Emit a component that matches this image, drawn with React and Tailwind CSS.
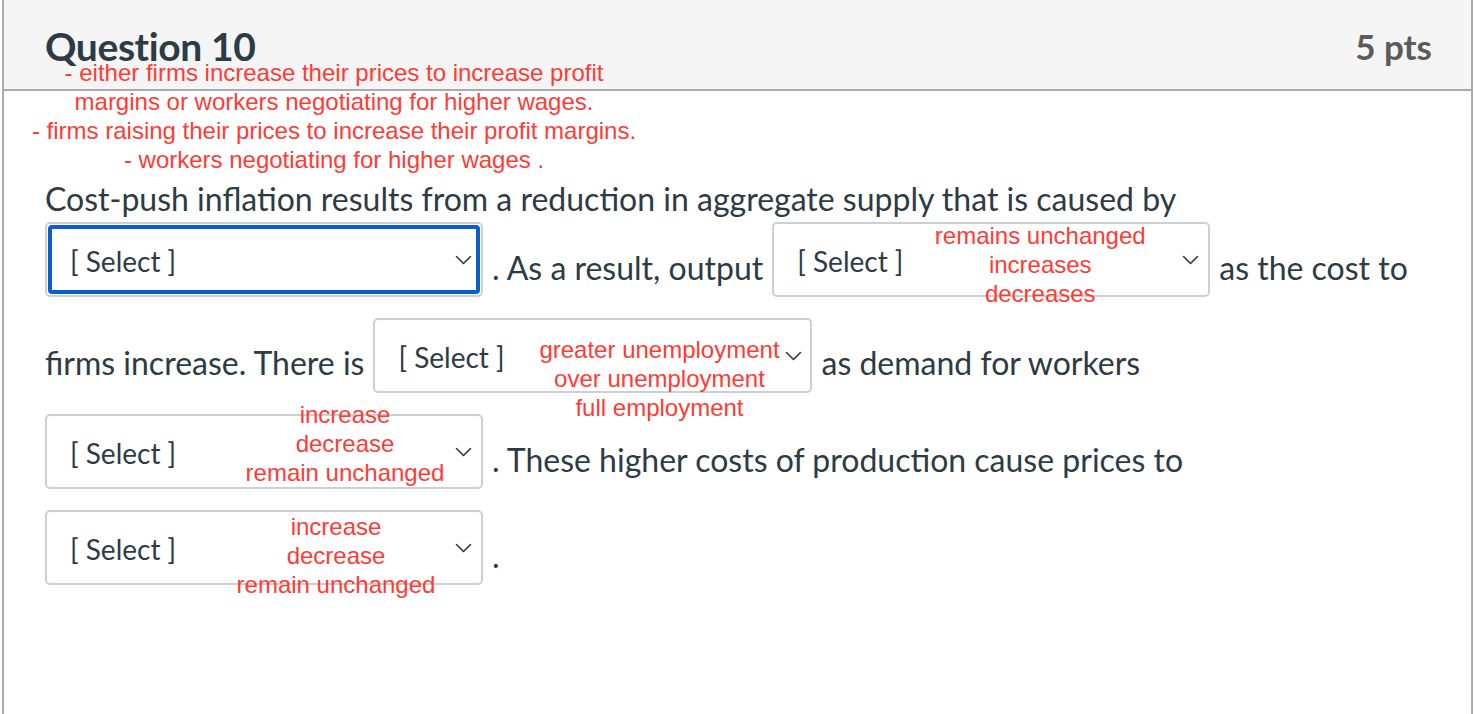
import React from 'react';

const lato = { fontFamily: 'Lato, "Open Sans", sans-serif' };

const Chevron = () => (
  <svg width="17" height="10" viewBox="0 0 17 10" fill="none" className="shrink-0">
    <path d="M1.5 1.5l7 7 7-7" stroke="#2d3b45" strokeWidth="1.6" strokeLinecap="round" strokeLinejoin="round" />
  </svg>
);

// red handwritten-looking notes laid over the form
const Note = ({ lines, className }) => (
  <div
    className={`absolute -translate-x-1/2 text-center whitespace-nowrap text-[24px] leading-[29px] text-[#ff3b36] pointer-events-none ${className}`}
    style={{ fontFamily: '"Liberation Sans", Arial, sans-serif' }}
  >
    {lines.map((l, i) => (
      <div key={i}>{l}</div>
    ))}
  </div>
);

const Select = ({ width, focused, notes, notesClass, pr = 'pr-[9px]' }) => (
  <div
    className={`relative h-[75px] ${width} shrink-0 flex items-center justify-between pl-[23px] ${pr} rounded-[5px] border-2 border-[#cdd0d2] bg-white`}
  >
    {focused && (
      <div className="absolute inset-[1px] rounded-[4px] border-[4px] border-[#0b5fcc]"></div>
    )}
    <span className="text-[28px] text-[#2d3b45] pt-[3px]">[ Select ]</span>
    <Chevron />
    {notes && <Note lines={notes} className={notesClass} />}
  </div>
);

export default function App() {
  return (
    <div className="relative w-[1474px] h-[714px] bg-white overflow-hidden" style={lato}>
      <div className="ml-[2px] mr-[1px] h-full border-x-2 border-[#ababab]">
        {/* Header */}
        <div className="h-[91px] bg-[#f5f5f5] border-b-2 border-[#ababab] flex justify-between pl-[41px] pr-[39px] pt-[26px]">
          <h1 className="text-[39px] leading-[40px] font-bold text-[#2d3b45] tracking-[-0.4px]">Question 10</h1>
          <span className="text-[35px] leading-[40px] font-bold text-[#5b5b5b]">5 pts</span>
        </div>

        {/* Body */}
        <div className="pl-[41px] pt-[88px] text-[32px] text-[#2d3b45]">
          <div className="h-[40px] leading-[40px]">
            Cost-push inflation results from a reduction in aggregate supply that is caused by
          </div>
          <div className="mt-[3px] flex flex-col gap-[21px]">
            <div className="flex items-center gap-[9px]">
              <Select width="w-[438px]" focused />
              <span className="pt-[16px]">. As a result, output</span>
              <Select
                width="w-[438px]"
                notes={['remains unchanged', 'increases', 'decreases']}
                notesClass="left-[266px] top-[-3px]"
              />
              <span className="pt-[16px]">as the cost to</span>
            </div>
            <div className="flex items-center gap-[9px]">
              <span className="pt-[14px]">firms increase. There is</span>
              <Select
                width="w-[439px]"
                pr="pr-[8px]"
                notes={['greater unemployment', 'over unemployment', 'full employment']}
                notesClass="left-[284px] top-[15px]"
              />
              <span className="pt-[14px]">as demand for workers</span>
            </div>
            <div className="flex items-center gap-[9px]">
              <Select
                width="w-[438px]"
                notes={['increase', 'decrease', 'remain unchanged']}
                notesClass="left-[298px] top-[-16px]"
              />
              <span className="pt-[16px]">. These higher costs of production cause prices to</span>
            </div>
            <div className="flex items-center gap-[9px]">
              <Select
                width="w-[438px]"
                notes={['increase', 'decrease', 'remain unchanged']}
                notesClass="left-[289px] top-[0px]"
              />
              <span className="pt-[16px]">.</span>
            </div>
          </div>
        </div>
      </div>

      <Note
        lines={[
          '- either firms increase their prices to increase profit',
          'margins or workers negotiating for higher wages.',
          '- firms raising their prices to increase their profit margins.',
          '- workers negotiating for higher wages .',
        ]}
        className="left-[334px] top-[58px]"
      />
    </div>
  );
}
